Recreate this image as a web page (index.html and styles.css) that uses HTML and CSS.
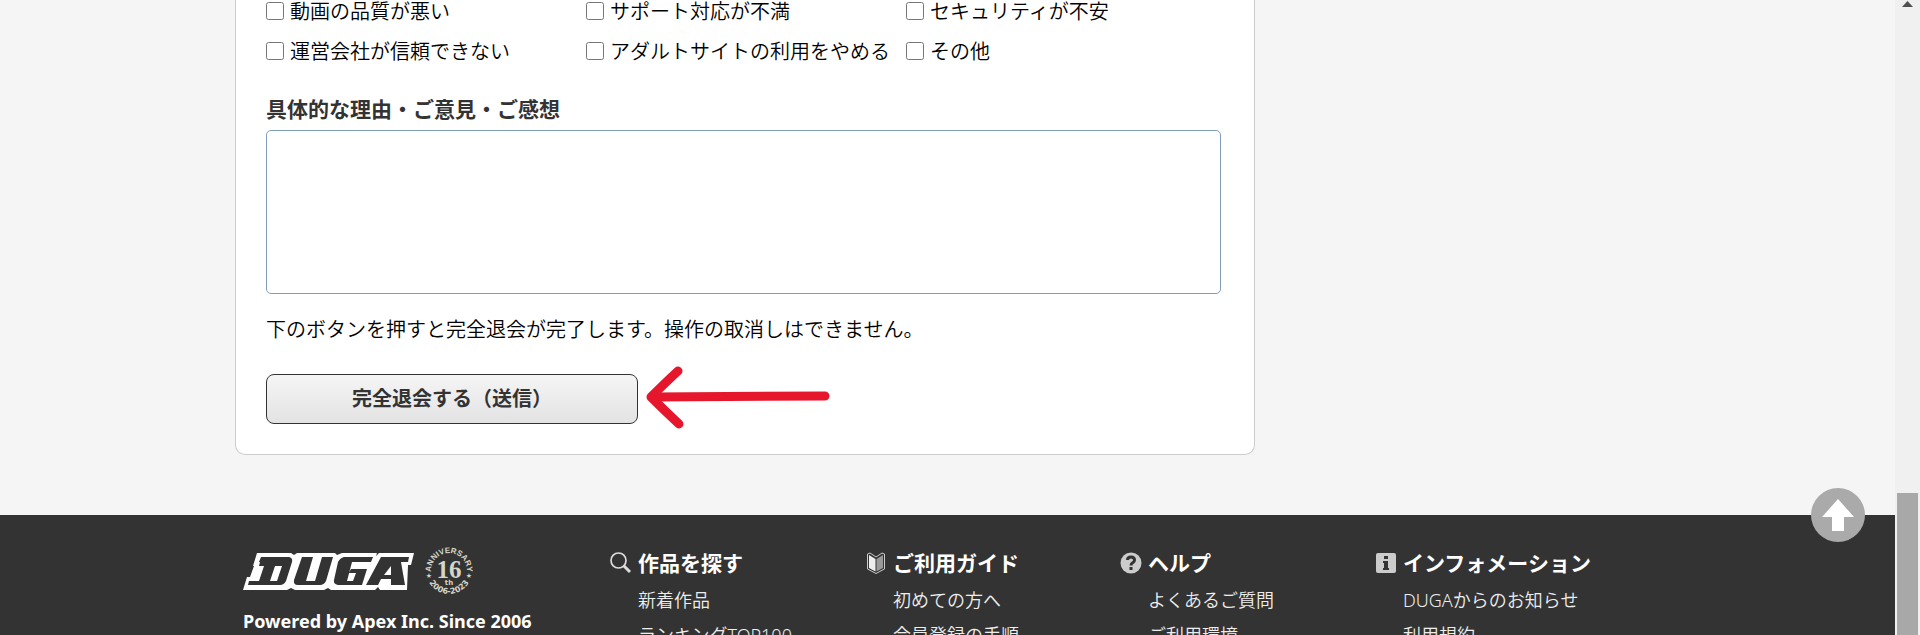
FILE: index.html
```html
<!DOCTYPE html>
<html lang="ja">
<head>
    <meta charset="UTF-8">
    <meta name="viewport" content="width=device-width, initial-scale=1.0">
    <title>DUGA 完全退会</title>
    <link rel="stylesheet" href="styles.css">
</head>
<body>

<div class="window">
    <div class="page">
        <main class="container">
            <form class="card">
                <div class="reasons">
                    <label><input type="checkbox" name="reason">動画の品質が悪い</label>
                    <label><input type="checkbox" name="reason">サポート対応が不満</label>
                    <label><input type="checkbox" name="reason">セキュリティが不安</label>
                    <label><input type="checkbox" name="reason">運営会社が信頼できない</label>
                    <label><input type="checkbox" name="reason">アダルトサイトの利用をやめる</label>
                    <label><input type="checkbox" name="reason">その他</label>
                </div>

                <label class="comment-label" for="comment">具体的な理由・ご意見・ご感想</label>
                <textarea class="comment" id="comment" name="comment"></textarea>

                <p class="note">下のボタンを押すと完全退会が完了します。操作の取消しはできません。</p>

                <div class="submit-row">
                    <button class="submit" type="submit">完全退会する（送信）</button>
                    <svg class="arrow" width="184" height="64" viewBox="0 0 184 64">
                        <path d="M179 31 L8 32" fill="none" stroke="#e6172d" stroke-width="9" stroke-linecap="round"/>
                        <path d="M32 6 Q20 17 5 32 Q18 45 33 59" fill="none" stroke="#e6172d" stroke-width="9" stroke-linecap="round" stroke-linejoin="round"/>
                    </svg>
                </div>
            </form>
        </main>

        <footer class="footer">
            <div class="container footer-inner">
                <div class="brand">
                    <div class="logos">
                        <svg class="logo" width="171" height="37" viewBox="0 0 171 37" role="img" aria-label="DUGA">
                            <path fill="#fff" d="M14 0H48L51 2L54 0H92L94 2L99 0H134L133 3L136 0H171L168 12H165L164 37H137L135 34L132 37H88L85 35L81 37H52L48 35L44 37H0L4 24H7L11 13H10Z"/>
                            <path fill="#333" d="M18 4H46Q50 5 49 9L43 28Q41 32 37 32H5L6 28H16L21 13H16L17 9H16ZM32 13L27 28H34L39 13Z"/>
                            <path fill="#333" d="M59 4H70L63 28H72L79 4H90L83 28Q81 32 77 32H55Q50 32 51 27Z"/>
                            <path fill="#333" d="M101 4H130L128 9H109L104 28H110L113 20H106L108 16H124L119 32H95Q90 31 91 27L95 9Q97 5 101 4Z"/>
                            <path fill="#333" d="M138 4H166L165 9H158L162 32H148V26H138L135 32H123ZM148 13L141 22H148Z"/>
                        </svg>
                        <svg class="badge" width="48" height="48" viewBox="0 0 48 48" role="img" aria-label="16th anniversary">
                            <path id="arc-top" d="M7 30A18 18 0 1 1 41 30" fill="none"/>
                            <path id="arc-bottom" d="M1 24A23 23 0 0 0 47 24" fill="none"/>
                            <text class="badge-ring"><textPath href="#arc-top" startOffset="50%">ANNIVERSARY</textPath></text>
                            <text class="badge-ring badge-years"><textPath href="#arc-bottom" startOffset="50%">2006-2023</textPath></text>
                            <text class="badge-star" x="4" y="31">★</text>
                            <text class="badge-star" x="44" y="31">★</text>
                            <text class="badge-num" x="24" y="31">16</text>
                            <text class="badge-th" x="24" y="38">th</text>
                        </svg>
                    </div>
                    <p class="powered">Powered by Apex Inc. Since 2006</p>
                </div>

                <nav class="col">
                    <h2>
                        <svg width="22" height="22" viewBox="0 0 22 22"><circle cx="8.500" cy="8.500" r="7.500" fill="none" stroke="#ddd" stroke-width="1.700"/><path d="M13.500 13.500L20 20" stroke="#ddd" stroke-width="3"/></svg>
                        作品を探す
                    </h2>
                    <a href="#">新着作品</a>
                    <a href="#">ランキングTOP100</a>
                </nav>
                <nav class="col">
                    <h2>
                        <svg width="22" height="22" viewBox="0 0 22 22"><path d="M2.500 2L5 1L11 5L17 1L19.500 2V17L11 21.500L2.500 17Z" fill="#333" stroke="#ccc"/><path d="M4 3L10.500 7V19.500L4 16Z" fill="#eee"/><path d="M18 3L11.500 7V19.500L18 16Z" fill="#999"/></svg>
                        ご利用ガイド
                    </h2>
                    <a href="#">初めての方へ</a>
                    <a href="#">会員登録の手順</a>
                </nav>
                <nav class="col">
                    <h2>
                        <svg width="22" height="22" viewBox="0 0 22 22"><circle cx="11" cy="11" r="10.500" fill="#ccc"/><path d="M7.500 8Q7.500 5 11 5T14.500 8Q14.500 9.500 13 10.500Q11 11.500 11 13.500M11 15V18" fill="none" stroke="#333" stroke-width="3"/></svg>
                        ヘルプ
                    </h2>
                    <a href="#">よくあるご質問</a>
                    <a href="#">ご利用環境</a>
                </nav>
                <nav class="col">
                    <h2>
                        <svg width="22" height="22" viewBox="0 0 22 22"><rect x="1" y="1" width="20" height="20" rx="2" fill="#ccc"/><path d="M9 4H13V7H9ZM8 9H13V16H14V18H8V16H9V11H8Z" fill="#333"/></svg>
                        インフォメーション
                    </h2>
                    <a href="#">DUGAからのお知らせ</a>
                    <a href="#">利用規約</a>
                </nav>
            </div>
        </footer>
    </div>

    <div class="scrollbar">
        <svg class="scroll-up" width="11" height="6" viewBox="0 0 11 6"><path d="M5.500 0L11 6H0Z" fill="#505050"/></svg>
        <div class="thumb"></div>
    </div>

    <a class="to-top" href="#" aria-label="ページの先頭へ">
        <svg width="54" height="54" viewBox="0 0 54 54"><circle cx="27" cy="27" r="27" fill="#aaa"/><path d="M27 11L43 29H33V43H21V29H11Z" fill="#fff"/></svg>
    </a>
</div>

</body>
</html>
```

FILE: styles.css
```css
* {
    box-sizing: border-box;
}
body {
    margin: 0;
    font-family: "Noto Sans", "Noto Sans CJK JP", sans-serif;
    font-size: 20px;
    color: #000;
    background: #f5f5f5;
}
.window {
    display: flex;
    position: relative;
    height: 100vh;
    overflow: hidden;
}
.page {
    flex: 1;
}
.container {
    max-width: 1425px;
    margin: 0 auto;
}
.card {
    max-width: 1020px;
    padding: 0 30px 30px;
    background: #fff;
    border: 1px solid #ccc;
    border-top: 0;
    border-radius: 0 0 10px 10px;
}
.reasons {
    display: grid;
    grid-template-columns: repeat(3, 320px);
    grid-auto-rows: 40px;
    margin-top: -9px;
    font-family: "Noto Sans CJK JP", sans-serif;
    font-weight: 350;
    line-height: 26px;
    white-space: nowrap;
}
.reasons label {
    display: flex;
    align-items: center;
}
.reasons input {
    width: 18px;
    height: 18px;
    margin: 0 6px 0 0;
}
.comment-label {
    display: block;
    margin-top: 22px;
    font-size: 21px;
    line-height: 32px;
    font-weight: bold;
    color: #333;
}
.comment {
    display: block;
    width: 100%;
    max-width: 955px;
    height: 164px;
    margin-top: 5px;
    border: 1px solid #7f9db9;
    border-radius: 5px;
    resize: none;
}
.note {
    margin: 21px 0 0;
    line-height: 30px;
    font-weight: 350;
}
.submit-row {
    display: flex;
    align-items: center;
    gap: 8px;
    height: 50px;
    margin-top: 29px;
}
.submit {
    width: 372px;
    height: 50px;
    padding: 0 0 4px;
    font: bold 20px "Noto Sans CJK JP", sans-serif;
    color: #333;
    background: linear-gradient(#f5f5f5, #e3e3e3);
    border: 1px solid #333;
    border-radius: 8px;
}
.arrow {
    margin-bottom: 4px;
}
.footer {
    margin-top: 60px;
    height: 200px;
    color: #fff;
    background: #333;
}
.footer-inner {
    display: flex;
    padding: 32px 30px 0 8px;
}
.brand {
    flex: 1;
}
.logos {
    display: flex;
    align-items: center;
    gap: 11px;
}
.powered {
    margin: 13px 0 0;
    font: bold 18px/26px "Noto Sans", sans-serif;
}
.badge-ring,
.badge-star,
.badge-num,
.badge-th {
    fill: #d5d5c8;
    font-family: "Liberation Sans", sans-serif;
    text-anchor: middle;
}
.badge-ring {
    font-size: 8px;
    font-weight: bold;
}
.badge-years {
    font: bold 8px "DejaVu Sans", sans-serif;
}
.badge-star {
    font-family: "DejaVu Sans", sans-serif;
    font-size: 7px;
}
.badge-num {
    font: bold 25px "Liberation Serif", serif;
}
.badge-th {
    font: bold 7px "DejaVu Sans", sans-serif;
}
.col {
    width: 255px;
}
.col h2 {
    display: flex;
    align-items: center;
    gap: 6px;
    margin: 0 0 4px;
    font-size: 21px;
    line-height: 32px;
}
.col a {
    display: block;
    margin-left: 28px;
    font-size: 18px;
    line-height: 35px;
    font-weight: 350;
    color: #eee;
    text-decoration: none;
}
.scrollbar {
    display: flex;
    flex-direction: column;
    align-items: center;
    justify-content: space-between;
    width: 25px;
    padding-top: 1px;
    background: #f0f0f0;
}
.thumb {
    width: 21px;
    height: 142px;
    background: #a8a8a8;
}
.to-top {
    position: absolute;
    right: 55px;
    bottom: 93px;
    height: 54px;
}
```
